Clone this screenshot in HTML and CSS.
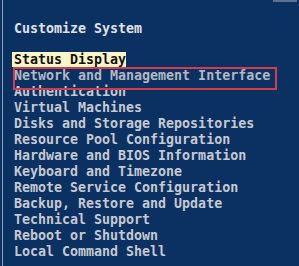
FILE: index.html
```html
<!DOCTYPE html>
<html lang="en">
<head>
    <meta charset="UTF-8">
    <meta name="viewport" content="width=device-width, initial-scale=1.0">
    <title>Customize System</title>
    <link rel="stylesheet" href="styles.css">
</head>
<body>
    <div class="screen">
        <div class="corner"><span class="corner-mark"></span></div>
        <div class="title">Customize System</div>
        <ul class="menu">
            <li class="item"><span class="current">Status Display</span></li>
            <li class="item marked">Network and Management Interface</li>
            <li class="item">Authentication</li>
            <li class="item">Virtual Machines</li>
            <li class="item">Disks and Storage Repositories</li>
            <li class="item">Resource Pool Configuration</li>
            <li class="item">Hardware and BIOS Information</li>
            <li class="item">Keyboard and Timezone</li>
            <li class="item">Remote Service Configuration</li>
            <li class="item">Backup, Restore and Update</li>
            <li class="item">Technical Support</li>
            <li class="item">Reboot or Shutdown</li>
            <li class="item">Local Command Shell</li>
        </ul>
    </div>
</body>
</html>
```

FILE: styles.css
```css
html, body {
margin: 0;
padding: 0;
background-color: #0b3062;
}

.screen {
margin-left: 2px;
height: 266px;
border-left: 1px solid #8f9fbc;
padding-left: 11px;
font-family: "DejaVu Sans Mono", "Liberation Mono", monospace;
font-size: 13.3px;
font-weight: bold;
line-height: 16px;
color: #c6cad0;
overflow: hidden;
}

.corner {
height: 3px;
display: flex;
justify-content: flex-end;
padding-right: 2px;
}

.corner-mark {
width: 24px;
height: 2px;
background-color: #5f7090;
}

.title {
margin-top: 18px;
color: #e0e2e6;
}

.menu {
list-style: none;
margin: 15px 0 0 0;
padding: 0;
}

.item {
height: 16px;
white-space: nowrap;
}

.current {
display: inline-block;
height: 15px;
line-height: 16px;
margin-left: -2px;
padding-left: 2px;
background-color: #fdf6c6;
color: #111111;
}

.marked {
position: relative;
color: #b4b8c0;
}

/* red annotation box */
.marked::after {
content: '';
position: absolute;
left: -1px;
top: -1px;
width: 264px;
height: 23px;
border: 2px solid #d43c4e;
box-sizing: border-box;
}
```
